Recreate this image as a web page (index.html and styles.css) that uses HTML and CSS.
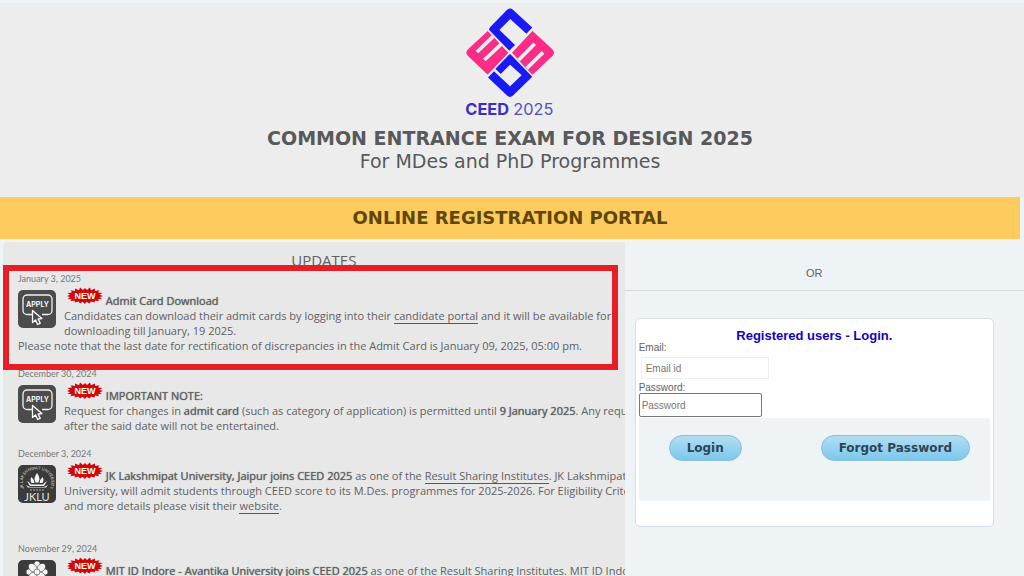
FILE: index.html
```html
<!DOCTYPE html>
<html lang="en">
<head>
    <meta charset="UTF-8">
    <meta name="viewport" content="width=device-width, initial-scale=1.0">
    <title>CEED 2025 - Online Registration Portal</title>
    <link rel="stylesheet" href="styles.css">
</head>
<body>
    <!-- Shared icons -->
    <svg class="sprite" aria-hidden="true">
        <symbol id="icon-apply" viewBox="0 0 38 38">
            <rect width="38" height="38" rx="5" fill="#4b4b4b"/>
            <path d="M14 24.500H9a4 4 0 0 1-4-4V9a4 4 0 0 1 4-4h21a4 4 0 0 1 4 4v11.500a4 4 0 0 1-4 4h-6" fill="none" stroke="#f2f2f2" stroke-width="1.300"/>
            <text x="19.500" y="17" text-anchor="middle" class="icon-text">APPLY</text>
            <path d="M14.500 20.500v12l3-2.500 2.200 4.500 2.600-1.300-2.200-4.200 3.800-.4z" fill="#4b4b4b" stroke="#fff" stroke-width="1.300" stroke-linejoin="round"/>
        </symbol>
        <symbol id="icon-new" viewBox="0 0 36 18">
            <path d="M18 1l2 2 3-2.500 1 2.700 4-1.700 0 2.500 4.500-.8-1.500 2.300 4.500.6-3 1.700L36 9l-3.500 1.200 2.500 1.600-4 .4 1 2-4-.6-.5 2-3.500-1.200-1.500 2.200-3-1.800L18 17l-2.500-2.200-2.500 1.800-1.500-2.200-3.500 1.200L7.500 13.600l-4 .6 1-2-4-.4L3 10.200 0 9l3-1.200L.5 6.100 5 5.500 3.500 3.200 8 4V1.500l4 1.700 1-2.700L16 3z" fill="#d0060c"/>
            <text x="18" y="12" text-anchor="middle" class="new-text">NEW</text>
        </symbol>
        <symbol id="icon-jklu" viewBox="0 0 38 38">
            <rect width="38" height="38" rx="5" fill="#3b3b3b"/>
            <path id="jklu-arc" d="M6.500 25C1 12 9 4.500 19 4.500S37 12 31.500 25" fill="none"/>
            <text class="arc-text"><textPath href="#jklu-arc" startOffset="50%" text-anchor="middle">JK LAKSHMIPAT UNIVERSITY</textPath></text>
            <path d="M19 8q4 5 1.500 9.500h-3Q15 13 19 8zM13.500 12q3 3 3 6h-3q-2-3 0-6zM24.500 12q-3 3-3 6h3q2-3 0-6zM9 16q2.500 1 4 3.500h12Q27 17 29 16l-3 5H12zM8 20l4 2h14l4-2-2 2.500H10z" fill="#f4f4f4"/>
            <path d="M12 25h14" stroke="#aaa" stroke-width="1" stroke-dasharray="2 1"/>
            <text x="19" y="36" text-anchor="middle" class="jklu-text">JKLU</text>
        </symbol>
        <symbol id="icon-avantika" viewBox="0 0 38 38">
            <rect width="38" height="38" rx="5" fill="#3b3b3b"/>
            <g fill="#f4f4f4" stroke="#3b3b3b" stroke-width=".6">
                <g id="petals">
                    <ellipse cx="19" cy="6" rx="3.600" ry="5"/>
                    <ellipse cx="19" cy="18" rx="3.600" ry="5"/>
                    <ellipse cx="13" cy="12" rx="5" ry="3.600"/>
                    <ellipse cx="25" cy="12" rx="5" ry="3.600"/>
                </g>
                <use href="#petals" transform="rotate(45 19 12)"/>
                <circle cx="19" cy="12" r="3"/>
            </g>
            <path d="M8 28h22M11 32h16" stroke="#f4f4f4" stroke-width="2"/>
        </symbol>
    </svg>

    <header class="header">
        <svg class="logo" viewBox="0 0 288 348" role="img" aria-label="CEED 2025">
            <path d="M202 80L144 27 94 78l56 54M87 211l57 54 54-52-54-49-37 37" fill="none" stroke="#1a1af4" stroke-width="26" stroke-linejoin="round"/>
            <path d="M78 80l61 66-61 67-60-57q-10-10 0-20zM211 80l-61 66 61 67 60-57q10-10 0-20z" fill="#fb2d86"/>
            <path d="M76 76l136 140M76 216L212 76" stroke="#ededed" stroke-width="5"/>
            <path d="M93 98l-48 46M117 121l-50 47M170 168l48-49M194 193l49-48" fill="none" stroke="#ededed" stroke-width="11"/>
            <text x="10" y="333" class="logo-name">CEED</text>
            <text x="154" y="333" class="logo-year">2025</text>
        </svg>
        <h1>COMMON ENTRANCE EXAM FOR DESIGN 2025</h1>
        <p class="subtitle">For MDes and PhD Programmes</p>
    </header>

    <div class="banner">ONLINE REGISTRATION PORTAL</div>

    <main class="content">
        <section class="updates">
            <h2>UPDATES</h2>
            <ul class="news">
                <li class="highlight">
                    <div class="date">January 3, 2025</div>
                    <svg class="thumb"><use href="#icon-apply"/></svg>
                    <p><svg class="new"><use href="#icon-new"/></svg> <b>Admit Card Download</b><br>
                    Candidates can download their admit cards by logging into their <a href="#">candidate portal</a> and it will be available for downloading till January, 19 2025.<br>
                    Please note that the last date for rectification of discrepancies in the Admit Card is January 09, 2025, 05:00 pm.</p>
                </li>
                <li>
                    <div class="date">December 30, 2024</div>
                    <svg class="thumb"><use href="#icon-apply"/></svg>
                    <p><svg class="new"><use href="#icon-new"/></svg> <b>IMPORTANT NOTE:</b><br>
                    Request for changes in <b>admit card</b> (such as category of application) is permitted until <b>9 January 2025</b>. Any request after the said date will not be entertained.</p>
                </li>
                <li>
                    <div class="date">December 3, 2024</div>
                    <svg class="thumb"><use href="#icon-jklu"/></svg>
                    <p><svg class="new"><use href="#icon-new"/></svg> <b>JK Lakshmipat University, Jaipur joins CEED 2025</b> as one of the <a href="#">Result Sharing Institutes</a>. JK Lakshmipat University, will admit students through CEED score to its M.Des. programmes for 2025-2026. For Eligibility Criteria and more details please visit their <a href="#">website</a>.<br><br></p>
                </li>
                <li>
                    <div class="date">November 29, 2024</div>
                    <svg class="thumb"><use href="#icon-avantika"/></svg>
                    <p><svg class="new"><use href="#icon-new"/></svg> <b>MIT ID Indore - Avantika University joins CEED 2025</b> as one of the <a href="#">Result Sharing Institutes</a>. MIT ID Indore</p>
                </li>
            </ul>
        </section>

        <section class="login">
            <div class="or">OR</div>
            <form class="card">
                <h3>Registered users - Login.</h3>
                <label for="email">Email:</label>
                <input type="email" id="email" class="email" placeholder="Email id">
                <label for="password">Password:</label>
                <input type="password" id="password" class="password" placeholder="Password">
                <div class="actions">
                    <button type="submit" class="btn">Login</button>
                    <button type="button" class="btn">Forgot Password</button>
                </div>
            </form>
        </section>
    </main>
</body>
</html>
```
FILE: styles.css
```css
* {
    box-sizing: border-box;
}
html {
    height: 100%;
    overflow: hidden;
}
body {
    display: flex;
    flex-direction: column;
    height: 100%;
    margin: 0;
    background-color: #eef3f6;
    border-top: 3px solid #eff4f9;
    color: #606163;
    font-family: "Open Sans", sans-serif;
    font-size: 11px;
    line-height: 15px;
    overflow: hidden;
}
h1, h2, h3, p, ul {
    margin: 0;
    padding: 0;
}
.sprite {
    display: none;
}

/* Header */
.header {
    flex: none;
    padding: 1px 4px 24px 0;
    background-color: #ededed;
    color: #58595b;
    font-family: "DejaVu Sans", Verdana, sans-serif;
    text-align: center;
}
.logo {
    display: block;
    width: 96px;
    height: 116px;
    margin: 0 auto 6px;
}
.logo-name {
    font: bold 49px Inter, sans-serif;
    fill: #3a2fc4;
}
.logo-year {
    font: 49px Inter, sans-serif;
    fill: #5550c0;
}
h1 {
    font-size: 19px;
    line-height: 24px;
}
.subtitle {
    font-size: 19px;
    line-height: 23px;
}
.banner {
    flex: none;
    margin-right: 4px;
    background-color: #fecb5f;
    color: #5f4700;
    font: bold 18px/42px "DejaVu Sans", Verdana, sans-serif;
    text-align: center;
}

/* Two columns */
.content {
    display: grid;
    grid-template-columns: 61% 39%;
    flex: 1;
    min-height: 0;
    border-top: 3px solid #f8f3ea;
}
.updates {
    margin-left: 3px;
    padding-left: 15px;
    border-top-left-radius: 5px;
    background-color: #e8e8e8;
    overflow: hidden;
}
.updates h2 {
    padding: 8px 0 2px 5px;
    font-size: 15px;
    font-weight: normal;
    line-height: 20px;
    text-align: center;
}
.news {
    margin-right: -20px;
    list-style: none;
}
.news li {
    position: relative;
    margin-bottom: 14px;
}
.news p {
    padding-top: 1px;
}
.news a {
    color: inherit;
    text-decoration: none;
    border-bottom: 1px solid #58595b;
}
.date {
    color: #777;
    font-family: Lato, sans-serif;
    font-size: 9px;
    line-height: 14px;
}
.thumb {
    float: left;
    width: 38px;
    height: 38px;
    margin: 4px 8px 6px 0;
}
.new {
    width: 36px;
    height: 18px;
    margin-left: 3px;
}
.news b {
    font-weight: 500;
    text-shadow: 0 0 1px #58595b;
}
/* Frame round the most important notice */
.highlight::after {
    content: "";
    position: absolute;
    z-index: 1;
    inset: -7px 27px -17px -15px;
    border: 6px solid #e81e26;
}

/* Text inside the icons */
.icon-text {
    font: bold 7px Inter, sans-serif;
    fill: #f4f4f4;
}
.new-text {
    font: bold 9px "Liberation Sans", sans-serif;
    fill: #fff;
}
.arc-text {
    font: 4px Inter, sans-serif;
    fill: #ddd;
}
.jklu-text {
    font: 11px Lato, sans-serif;
    fill: #e4e4e4;
}

/* Login */
.login {
    font-family: "Liberation Sans", Arial, sans-serif;
}
.or {
    padding: 24px 20px 9px 0;
    border-bottom: 1px solid #d3d9de;
    text-align: center;
}
.card {
    margin: 27px 30px 0 10px;
    padding: 10px 3px 25px;
    border: 1px solid #d5dde5;
    border-radius: 5px;
    background-color: #fff;
    font-size: 10px;
}
.card h3 {
    color: #1402be;
    font-size: 13px;
    line-height: 13px;
    text-align: center;
}
.card label {
    display: block;
    line-height: 11px;
}
.card input {
    display: block;
    color: #333;
    font: 10px "Liberation Sans", Arial, sans-serif;
}
.card .email {
    width: 128px;
    height: 22px;
    margin: 4px 2px 3px;
    padding: 0 4px;
    border: 1px solid #efefef;
}
.card .password {
    width: 123px;
    height: 24px;
    padding: 0 2px;
    border: 1px solid #767676;
    border-radius: 2px;
}
.actions {
    display: flex;
    justify-content: space-between;
    margin-top: 1px;
    padding: 17px 20px 40px 30px;
    background-color: #eef3f6;
}
.btn {
    height: 26px;
    padding: 0 17px;
    border: 1px solid #8dbdd5;
    border-radius: 13px;
    background: linear-gradient(#b4ddf3, #7bc9ec);
    color: #2d4654;
    font: bold 12px "DejaVu Sans", Verdana, sans-serif;
    cursor: pointer;
}
```
